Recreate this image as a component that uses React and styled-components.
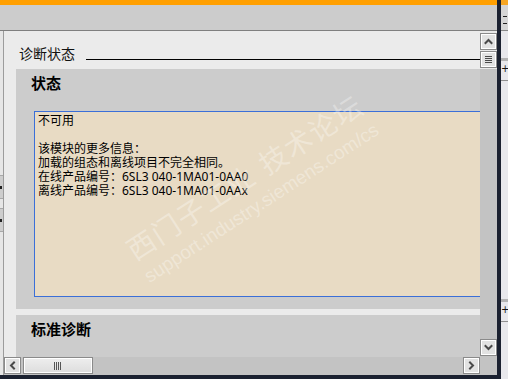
import React from 'react';
import styled, {createGlobalStyle} from 'styled-components';

const GlobalStyle = createGlobalStyle`
  html, body {
    margin: 0;
    padding: 0;
    overflow: hidden;
    background: #e8e8ec;
  }
  * {
    box-sizing: border-box;
  }
`;

const Screen = styled.div`
  position: relative;
  width: 508px;
  height: 379px;
  display: flex;
  overflow: hidden;
  background: #e8e8ec;
  font-family: "Noto Sans CJK SC", "Noto Sans", sans-serif;
`;

const Window = styled.div`
  width: 501px;
  height: 379px;
  display: flex;
  flex-direction: column;
  border-right: 4px solid #1b2130;
  border-bottom: 4px solid #1b2130;
`;

const Accent = styled.div`
  height: 5px;
  background: #ff9f00;
`;

const Header = styled.div`
  height: 26px;
  background: #cccccc;
  border-bottom: 1px solid #7f7f7f;
`;

const Body = styled.div`
  flex: 1;
  display: flex;
  min-height: 0;
`;

const Gutter = styled.div`
  width: 4px;
  display: flex;
  flex-direction: column;
  background: #e6e6e6;
  border-right: 1px solid #9c9c9c;
`;

const Stub = styled.div`
  height: 24px;
  margin-top: ${p => p.$top}px;
  background: #cdcdcd;
  border-top: 1px solid #a8a8a8;
  border-bottom: 1px solid #a8a8a8;
  display: flex;
  align-items: center;

  &::after {
    content: "";
    width: 2px;
    height: 3px;
    background: #222;
  }
`;

const Pane = styled.div`
  flex: 1;
  display: grid;
  grid-template-columns: 1fr 17px;
  grid-template-rows: 1fr 18px;
  min-width: 0;
`;

const Viewport = styled.div`
  background: #ebebeb;
  overflow: hidden;
  display: flex;
  flex-direction: column;
`;

const HeadingRow = styled.div`
  height: 38px;
  flex: none;
  display: flex;
  align-items: flex-end;
  padding: 0 0 8px 15px;
`;

const Heading = styled.div`
  font-size: 14px;
  line-height: 16px;
  color: #111;
`;

const Rule = styled.div`
  flex: 1;
  height: 1px;
  margin: 0 0 1px 11px;
  background: #000;
`;

const Section = styled.div`
  flex: none;
  margin: ${p => p.$gap}px 0 0 12px;
  padding: 5px 0 ${p => p.$bottom}px 15px;
  background: #cccccc;
`;

const SectionTitle = styled.div`
  font-size: 15px;
  line-height: 18px;
  font-weight: 700;
  color: #000;
`;

const InfoBox = styled.div`
  height: 186px;
  margin: 19px 0 0 3px;
  padding: 2px 0 0 3px;
  background: #e8dbc4;
  border: 1px solid #3b6fd8;
  border-right: none;
  font-family: "Noto Sans", "Noto Sans CJK SC", sans-serif;
  font-size: 12px;
  line-height: 14px;
  color: #000;
`;

const InfoLine = styled.div`
  height: 14px;
  white-space: nowrap;
`;

const VScroll = styled.div`
  display: flex;
  flex-direction: column;
  align-items: center;
  background: #c3c3c3;
`;

const ScrollCap = styled.div`
  width: 100%;
  height: 38px;
  padding-top: 2px;
  display: flex;
  flex-direction: column;
  align-items: center;
  gap: 1px;
  background: #e9e9e9;
`;

const ScrollButton = styled.div`
  width: 17px;
  height: 17px;
  flex: none;
  margin: ${p => p.$margin || '0'};
  display: flex;
  align-items: center;
  justify-content: center;
  background: #e2e2e2;
  border: 1px solid #8a8a8a;
  box-shadow: inset 0 0 0 1px #ffffff;
`;

const HScroll = styled.div`
  display: flex;
  align-items: flex-start;
  gap: 2px;
  background: #c3c3c3;
`;

const Thumb = styled.div`
  width: 70px;
  height: 17px;
  display: flex;
  align-items: center;
  justify-content: center;
  background: linear-gradient(#eeeeee, #dddddd);
  border: 1px solid #8a8a8a;
  box-shadow: inset 0 0 0 1px #ffffff;
`;

const Corner = styled.div`
  background: #c3c3c3;
`;

const Peek = styled.div`
  width: 7px;
  display: flex;
  flex-direction: column;
  background: #e8e8ec;
`;

const PeekTop = styled.div`
  height: 5px;
  background: #f7a623;
`;

const PeekHead = styled.div`
  height: 26px;
  padding: 11px 0 0 2px;
  display: flex;
  flex-direction: column;
  gap: 6px;
  background: #d6d6d6;
  border-bottom: 1px solid #888;

  &::before, &::after {
    content: "";
    width: 4px;
    height: 1px;
    background: #222;
  }
`;

const PeekGroup = styled.div`
  height: 23px;
  margin-top: ${p => p.$top}px;
  border-top: 3px solid #b3b3b3;
  border-bottom: 1px solid #8f8f8f;
  font-family: "DejaVu Sans", sans-serif;
  font-size: 10px;
  line-height: 12px;
  padding: 2px 0 0 0;
  color: #111;
  overflow: hidden;
`;

const Watermark = styled.div`
  position: absolute;
  left: 120px;
  top: 238px;
  transform: rotate(-33deg);
  transform-origin: 0 0;
  pointer-events: none;
  white-space: nowrap;
  color: rgba(255, 255, 255, 0.32);
`;

const WmTitle = styled.div`
  font-family: "Noto Sans CJK SC", sans-serif;
  font-size: 28px;
  line-height: 32px;
  letter-spacing: 1.5px;
`;

const WmGap = styled.span`
  margin-left: 10px;
`;

const WmUrl = styled.div`
  margin-top: 5px;
  font-family: "Liberation Sans", Arial, sans-serif;
  font-size: 19px;
  line-height: 22px;
`;

const Chevron = ({dir}) => {
    const pts = {
        up: '1.5,6 4.5,3 7.5,6',
        down: '1.5,3 4.5,6 7.5,3',
        left: '6,1.5 3,4.5 6,7.5',
        right: '3,1.5 6,4.5 3,7.5',
    }[dir];
    return (
        <svg width="9" height="9" viewBox="0 0 9 9">
            <polyline points={pts} fill="none" stroke="#4a4a4a" strokeWidth="2" strokeLinecap="square"/>
        </svg>
    );
};

const MenuGlyph = () => (
    <svg width="9" height="9" viewBox="0 0 9 9" shapeRendering="crispEdges">
        {[1, 3, 5, 7].map(y => <rect key={y} x="1" y={y} width="7" height="1" fill="#4a4a4a"/>)}
    </svg>
);

const Grip = () => (
    <svg width="8" height="8" viewBox="0 0 8 8" shapeRendering="crispEdges">
        {[0, 2, 4, 6].map(x => <rect key={x} x={x} y="0" width="1" height="8" fill="#555"/>)}
    </svg>
);

const infoLines = [
    '不可用',
    '',
    '该模块的更多信息：',
    '加载的组态和离线项目不完全相同。',
    '在线产品编号：6SL3 040-1MA01-0AA0',
    '离线产品编号：6SL3 040-1MA01-0AAx',
];

export default function App() {
    return (
        <Screen>
            <GlobalStyle/>
            <Window>
                <Accent/>
                <Header/>
                <Body>
                    <Gutter>
                        <Stub $top={144}/>
                        <Stub $top={9}/>
                    </Gutter>
                    <Pane>
                        <Viewport>
                            <HeadingRow>
                                <Heading>诊断状态</Heading>
                                <Rule/>
                            </HeadingRow>
                            <Section $gap={0} $bottom={12}>
                                <SectionTitle>状态</SectionTitle>
                                <InfoBox>
                                    {infoLines.map((line, i) => (
                                        <InfoLine key={i}>{line}</InfoLine>
                                    ))}
                                </InfoBox>
                            </Section>
                            <Section $gap={6} $bottom={20}>
                                <SectionTitle>标准诊断</SectionTitle>
                            </Section>
                        </Viewport>
                        <VScroll>
                            <ScrollCap>
                                <ScrollButton><Chevron dir="up"/></ScrollButton>
                                <ScrollButton><MenuGlyph/></ScrollButton>
                            </ScrollCap>
                            <ScrollButton $margin="auto 0 1px 0"><Chevron dir="down"/></ScrollButton>
                        </VScroll>
                        <HScroll>
                            <ScrollButton><Chevron dir="left"/></ScrollButton>
                            <Thumb><Grip/></Thumb>
                            <ScrollButton $margin="0 0 0 auto"><Chevron dir="right"/></ScrollButton>
                        </HScroll>
                        <Corner/>
                    </Pane>
                </Body>
            </Window>
            <Peek>
                <PeekTop/>
                <PeekHead/>
                <PeekGroup $top={27}>+</PeekGroup>
                <PeekGroup $top={218}>+</PeekGroup>
            </Peek>
            <Watermark>
                <WmTitle>西门子工业<WmGap>技术论坛</WmGap></WmTitle>
                <WmUrl>support.industry.siemens.com/cs</WmUrl>
            </Watermark>
        </Screen>
    );
}
